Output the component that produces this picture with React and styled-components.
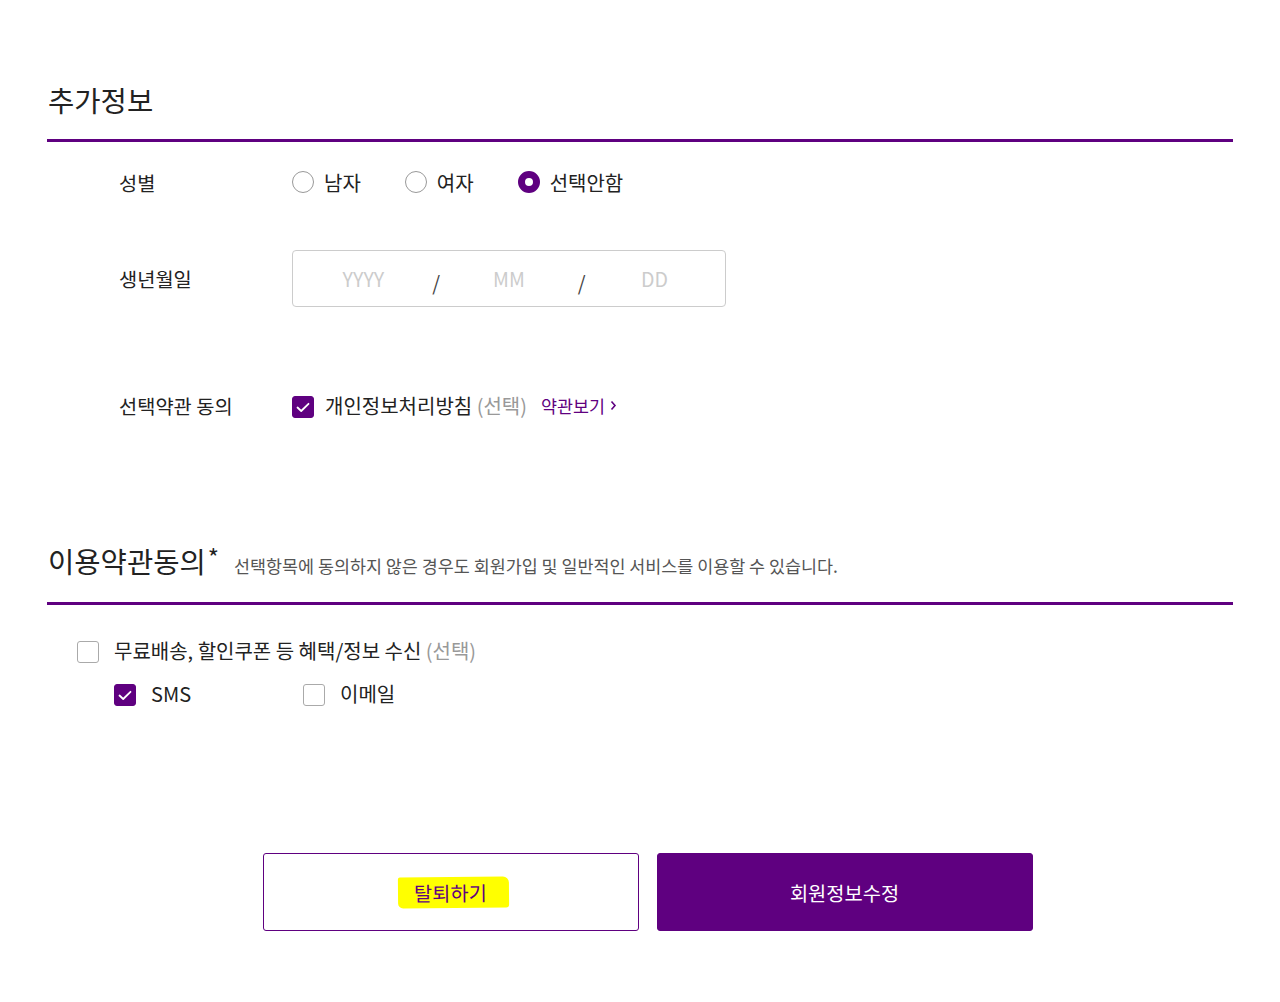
import styled, { createGlobalStyle } from "styled-components";

const PURPLE = "#5f0080";

const GlobalStyle = createGlobalStyle`
  body {
    margin: 0;
    background: #fff;
    font-family: "Noto Sans CJK KR", "Noto Sans", sans-serif;
    color: #333;
  }
`;

const Check = () => (
  <svg width="14" height="11" viewBox="0 0 14 11" fill="none">
    <path d="M1.5 5.5L5.2 9L12.5 1.8" stroke="#fff" strokeWidth="1.8" strokeLinecap="round" strokeLinejoin="round" />
  </svg>
);

const App = () => {
  return (
    <Page>
      <GlobalStyle />
      <Header>
        <Title>추가정보</Title>
      </Header>

      <Row top={20} height={40}>
        <Label>성별</Label>
        <Radios>
          <Option>
            <Radio />
            남자
          </Option>
          <Option>
            <Radio />
            여자
          </Option>
          <Option>
            <Radio checked />
            선택안함
          </Option>
        </Radios>
      </Row>

      <Row top={48} height={56}>
        <Label>생년월일</Label>
        <DateBox>
          <DatePart>YYYY</DatePart>
          <Slash>/</Slash>
          <DatePart>MM</DatePart>
          <Slash>/</Slash>
          <DatePart>DD</DatePart>
        </DateBox>
      </Row>

      <Row top={79} height={40}>
        <Label>선택약관 동의</Label>
        <Option>
          <Box checked space={11}>
            <Check />
          </Box>
          개인정보처리방침 <Muted>(선택)</Muted>
          <TermsLink>
            약관보기
            <svg width="7" height="11" viewBox="0 0 7 11" fill="none">
              <path d="M1.5 1.5L5 5.5L1.5 9.5" stroke={PURPLE} strokeWidth="1.6" />
            </svg>
          </TermsLink>
        </Option>
      </Row>

      <Header gap={118}>
        <Title>
          이용약관동의<Star>*</Star>
        </Title>
        <Sub>선택항목에 동의하지 않은 경우도 회원가입 및 일반적인 서비스를 이용할 수 있습니다.</Sub>
      </Header>

      <AgreeList>
        <AgreeRow>
          <Option>
            <Box />
            무료배송, 할인쿠폰 등 혜택/정보 수신 <Muted>(선택)</Muted>
          </Option>
        </AgreeRow>
        <AgreeRow indent>
          <SubOption>
            <Box checked>
              <Check />
            </Box>
            SMS
          </SubOption>
          <SubOption>
            <Box />
            이메일
          </SubOption>
        </AgreeRow>
      </AgreeList>

      <Buttons>
        <Button>
          <Marker>탈퇴하기</Marker>
        </Button>
        <Button primary>회원정보수정</Button>
      </Buttons>
    </Page>
  );
};

const Page = styled.div`
  padding: 82px 47px 72px;
  width: 1186px;
`;

const Header = styled.div`
  display: flex;
  align-items: baseline;
  margin-top: ${(p) => p.gap || 0}px;
  padding-bottom: 21px;
  border-bottom: 3px solid ${PURPLE};
`;

const Title = styled.h2`
  margin: 0 0 0 1px;
  font-size: 28.6px;
  line-height: 36px;
  font-weight: 400;
  color: #222;
`;

const Star = styled.span`
  position: relative;
  top: -6px;
  font-size: 24px;
  margin-left: 2px;
`;

const Sub = styled.span`
  margin-left: 15px;
  font-size: 17.4px;
  color: #555;
`;

const Row = styled.div`
  display: flex;
  align-items: center;
  margin-top: ${(p) => p.top}px;
  height: ${(p) => p.height}px;
  padding-left: 72px;
`;

const Label = styled.div`
  width: 173px;
  flex-shrink: 0;
  font-size: 19.8px;
  color: #222;
`;

const Radios = styled.div`
  display: flex;
  gap: 44px;
`;

const Option = styled.label`
  display: flex;
  align-items: center;
  font-size: 20px;
  color: #222;
  white-space: pre;
`;

const Radio = styled.span`
  box-sizing: border-box;
  width: 22px;
  height: 22px;
  border-radius: 50%;
  margin-right: 10px;
  border: ${(p) => (p.checked ? `7px solid ${PURPLE}` : "1px solid #999")};
  background: #fff;
`;

const Box = styled.span`
  box-sizing: border-box;
  display: flex;
  align-items: center;
  justify-content: center;
  width: 22px;
  height: 22px;
  border-radius: 3px;
  margin-right: ${(p) => p.space || 15}px;
  margin-top: 4px;
  border: 1px solid ${(p) => (p.checked ? PURPLE : "#aaa")};
  background: ${(p) => (p.checked ? PURPLE : "#fff")};
`;

const Muted = styled.span`
  color: #999;
`;

const TermsLink = styled.a`
  display: flex;
  align-items: center;
  gap: 5px;
  margin-left: 14px;
  font-size: 17.4px;
  color: ${PURPLE};
`;

const DateBox = styled.div`
  box-sizing: border-box;
  display: grid;
  grid-template-columns: repeat(5, 1fr);
  align-items: center;
  width: 434px;
  height: 57px;
  padding: 0 34px;
  border: 1px solid #ccc;
  border-radius: 4px;
`;

const DatePart = styled.span`
  text-align: center;
  font-size: 19.6px;
  color: #ccc;
`;

const Slash = styled.span`
  text-align: center;
  font-size: 20px;
  color: #444;
  margin-top: 8px;
`;

const AgreeList = styled.div`
  padding-top: 28px;
  padding-left: 30px;
  display: flex;
  flex-direction: column;
  gap: 9px;
`;

const AgreeRow = styled.div`
  display: flex;
  align-items: center;
  height: 34px;
  padding-left: ${(p) => (p.indent ? 37 : 0)}px;
`;

const SubOption = styled(Option)`
  width: 189px;
`;

const Buttons = styled.div`
  display: flex;
  justify-content: center;
  gap: 18px;
  margin-top: 143px;
  padding-left: 15px;
`;

const Button = styled.button`
  box-sizing: border-box;
  width: 376px;
  height: 78px;
  border-radius: 3px;
  border: 1px solid ${PURPLE};
  background: ${(p) => (p.primary ? PURPLE : "#fff")};
  color: ${(p) => (p.primary ? "#fff" : PURPLE)};
  font-family: "Noto Sans CJK KR", "Noto Sans", sans-serif;
  font-size: 19.8px;
  font-weight: 400;
  cursor: pointer;
`;

const Marker = styled.span`
  display: inline-block;
  margin-left: 6px;
  padding: 1px 22px 1px 16px;
  background: #ffff00;
  border-radius: 2px 6px 3px 5px;
  transform: rotate(-0.5deg);
`;

export default App;
